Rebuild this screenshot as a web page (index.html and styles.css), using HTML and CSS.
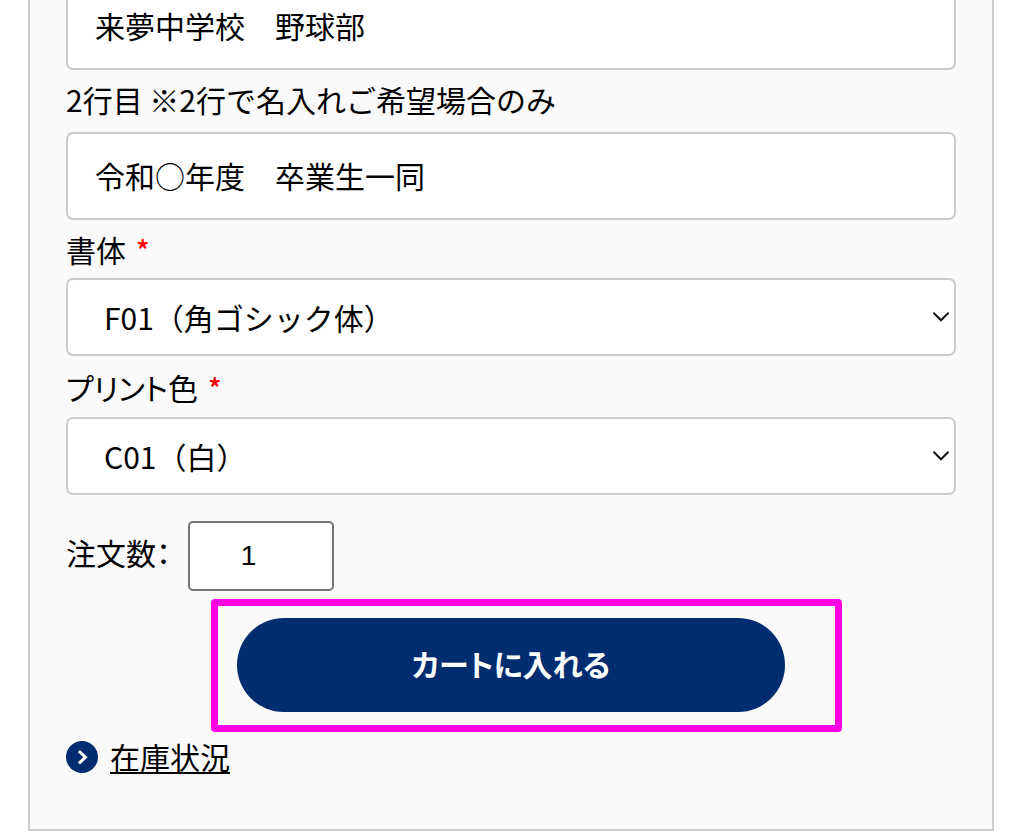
FILE: index.html
```html
<!DOCTYPE html>
<html lang="ja">
<head>
<meta charset="utf-8">
<meta name="viewport" content="width=device-width, initial-scale=1">
<title>名入れ注文</title>
<link rel="stylesheet" href="styles.css">
</head>
<body>
<form class="panel">
  <input class="text-field" type="text" aria-label="1行目" value="来夢中学校　野球部">

  <label class="label label-note" for="line2">2行目 ※2行で名入れご希望場合のみ</label>
  <input class="text-field" id="line2" type="text" value="令和○年度　卒業生一同">

  <label class="label" for="typeface">書体<span class="required">*</span></label>
  <div class="select-box">
    <select class="select" id="typeface"><option>F01（角ゴシック体）</option></select>
    <svg class="chevron" viewBox="0 0 16 10" aria-hidden="true"><path d="M1 1.3 8 8.3 15 1.3"/></svg>
  </div>

  <label class="label label-spaced" for="color">プリント色<span class="required">*</span></label>
  <div class="select-box">
    <select class="select" id="color"><option>C01（白）</option></select>
    <svg class="chevron" viewBox="0 0 16 10" aria-hidden="true"><path d="M1 1.3 8 8.3 15 1.3"/></svg>
  </div>

  <div class="quantity-row">
    <label for="quantity">注文数：</label>
    <input class="quantity" id="quantity" type="number" value="1">
  </div>

  <div class="cart">
    <button class="cart-button" type="button">カートに入れる</button>
    <span class="highlight"></span>
  </div>

  <a class="stock" href="#stock">
    <svg class="stock-icon" viewBox="0 0 32 32" aria-hidden="true"><circle cx="16" cy="16" r="16"/><path d="M14 11.2 19.5 16.2 14 21.4"/></svg>
    <span class="stock-text">在庫状況</span>
  </a>
</form>
</body>
</html>
```
FILE: styles.css
```css
* { box-sizing: border-box; }

body {
  margin: 0;
  padding: 0 28px;
  overflow: hidden;
  background: #fff;
  color: #000;
  font: 30px/40px "Noto Sans CJK JP", sans-serif;
}

input, select, button {
  font: inherit;
  color: inherit;
}

.panel {
  display: flex;
  flex-direction: column;
  margin-top: -18px;
  padding: 0 36px 52px;
  border: 2px solid #ccc;
  border-top: 0;
  background: #fafafa;
}

.label, .quantity-row, .cart-button {
  font-feature-settings: "palt";
}

.label {
  display: flex;
  align-items: center;
  gap: 10px;
  height: 58px;
}

.label-note {
  height: 62px;
  padding-bottom: 4px;
  font-feature-settings: normal;
}

.label-spaced {
  height: 61px;
}

.required {
  color: #f00;
  font-size: 28px;
  font-weight: 500;
}

.text-field {
  width: 100%;
  height: 88px;
  padding: 0 27px 2px;
  border: 2px solid #ccc;
  border-radius: 7px;
  background: #fff;
}

.select-box {
  position: relative;
}

.select {
  display: block;
  width: 100%;
  height: 78px;
  padding: 0 36px;
  border: 2px solid #ccc;
  border-radius: 7px;
  background: #fff;
  appearance: none;
}

.chevron {
  position: absolute;
  top: 34px;
  right: 7px;
  width: 16px;
  height: 10px;
  fill: none;
  stroke: #111;
  stroke-width: 2;
  stroke-linecap: round;
  pointer-events: none;
}

.quantity-row {
  display: flex;
  align-items: baseline;
  gap: 17px;
  margin-top: 26px;
}

.quantity {
  width: 146px;
  height: 70px;
  padding: 0 10px 0 0;
  border: 2px solid #767676;
  border-radius: 5px;
  background: #fff;
  font-family: "Liberation Sans", sans-serif;
  font-size: 28px;
  text-align: center;
  appearance: textfield;
}

.cart {
  position: relative;
  align-self: center;
  width: 548px;
  max-width: 100%;
  margin-top: 27px;
}

.cart-button {
  display: block;
  width: 100%;
  height: 94px;
  padding: 0 0 4px;
  border: 0;
  border-radius: 47px;
  background: #002c70;
  color: #fff;
  font-weight: 700;
}

.highlight {
  position: absolute;
  inset: -19px -57px -20px -26px;
  border: 7px solid #ff00e4;
  border-radius: 4px;
  pointer-events: none;
}

.stock {
  display: flex;
  align-items: center;
  align-self: flex-start;
  gap: 12px;
  margin-top: 25px;
  color: inherit;
  text-decoration: none;
}

.stock-icon {
  width: 32px;
  height: 32px;
  fill: #002c70;
}

.stock-icon path {
  fill: none;
  stroke: #fff;
  stroke-width: 3;
  stroke-linecap: square;
}

.stock-text {
  padding-bottom: 2px;
  line-height: 38px;
  text-decoration: underline;
  text-decoration-thickness: 2px;
  text-underline-offset: 3px;
  text-decoration-skip-ink: none;
}
```
